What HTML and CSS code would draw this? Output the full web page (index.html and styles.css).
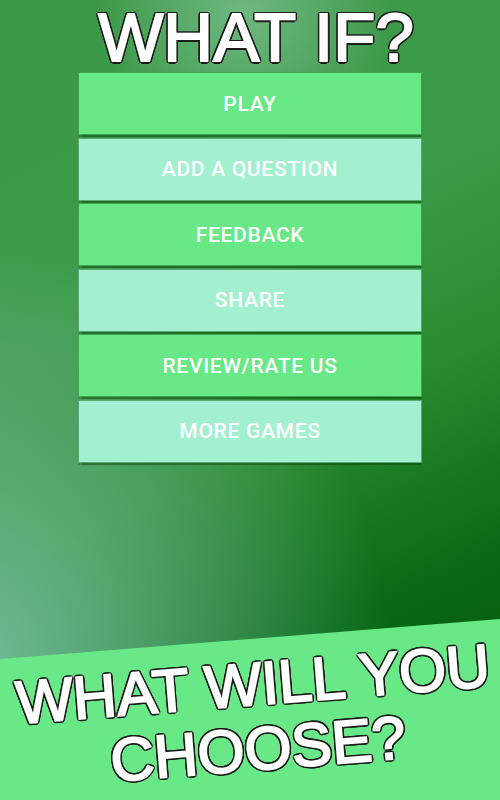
FILE: index.html
```html
<html>
<head>
<title>What If?</title>
<meta name="viewport" content="width=device-width,initial-scale=1">
<link rel="stylesheet" href="styles.css">
</head>
<body>
  <div class="screen">
    <div class="title outlined">WHAT IF?</div>
    <div class="menu">
      <div class="btn btn-green">PLAY</div>
      <div class="btn btn-mint">ADD A QUESTION</div>
      <div class="btn btn-green">FEEDBACK</div>
      <div class="btn btn-mint">SHARE</div>
      <div class="btn btn-green">REVIEW/RATE US</div>
      <div class="btn btn-mint">MORE GAMES</div>
    </div>
    <div class="banner">
      <div class="banner-text outlined">WHAT WILL YOU<br>CHOOSE?</div>
    </div>
  </div>
</body>
</html>
```

FILE: styles.css
```css
html,body { margin: 0; padding: 0; font-family: "Liberation Sans", Arial, sans-serif; }
.screen {
  position: relative; width: 500px; height: 800px; overflow: hidden;
  display: flex; flex-direction: column; align-items: center;
  background:
    radial-gradient(ellipse 150px 130px at 245px 15px, rgba(120,190,140,.85), rgba(120,190,140,0)),
    radial-gradient(ellipse 420px 420px at -30px 660px, rgba(120,190,160,.95), rgba(120,190,160,0)),
    linear-gradient(155deg, #3b9846 0%, #3d9b4a 35%, #2a8a2e 55%, #0a6a17 75%, #004f00 100%);
}

/* white letters, thickened a little, with a thin dark rim */
.outlined {
  color: #fff; -webkit-text-stroke: 2px #fff;
  text-shadow:
    2.5px 0 0 #1c1c1c, -2.5px 0 0 #1c1c1c, 0 2.5px 0 #1c1c1c, 0 -2.5px 0 #1c1c1c,
    1.8px 1.8px 0 #1c1c1c, -1.8px 1.8px 0 #1c1c1c, 1.8px -1.8px 0 #1c1c1c, -1.8px -1.8px 0 #1c1c1c,
    2.3px 1px 0 #1c1c1c, -2.3px 1px 0 #1c1c1c, 2.3px -1px 0 #1c1c1c, -2.3px -1px 0 #1c1c1c,
    1px 2.3px 0 #1c1c1c, -1px 2.3px 0 #1c1c1c, 1px -2.3px 0 #1c1c1c, -1px -2.3px 0 #1c1c1c;
}

.title { padding-left: 12px; line-height: 76px; height: 76px; margin-bottom: -4px; font-size: 69px; white-space: nowrap; }
.menu { width: 344px; display: flex; flex-direction: column; gap: 2.5px; }
.btn {
  height: 63px; box-sizing: border-box; display: flex; align-items: center; justify-content: center;
  font-family: Roboto, "Liberation Sans", sans-serif; font-weight: 500; font-size: 21px; letter-spacing: 0.7px; color: #fff;
  border: 1px solid rgba(30,110,40,.55); box-shadow: 0 1.5px 1px rgba(0,60,0,.45);
}
.btn-green { background: #68e887; }
.btn-mint { background: #a3f0d1; }
.banner {
  position: absolute; left: -40px; top: 659px; width: 600px; height: 220px;
  background: #68e887; transform-origin: 40px 0; transform: rotate(-4.57deg);
}
.banner-text {
  position: absolute; left: 40px; top: 13px; width: 500px; text-align: center; white-space: nowrap;
  font-size: 60.5px; line-height: 65px;
}
```
